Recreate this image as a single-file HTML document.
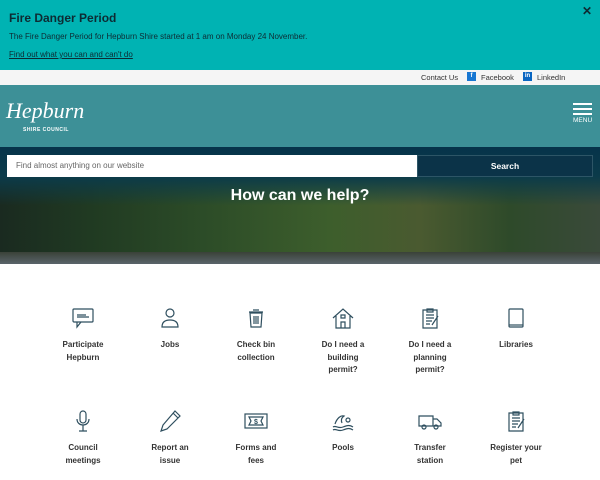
<!DOCTYPE html>
<html><head><meta charset="utf-8"><style>
*{margin:0;padding:0;box-sizing:border-box}
body{width:600px;height:480px;overflow:hidden;font-family:"Liberation Sans",sans-serif;background:#fff;position:relative}
.banner{position:absolute;left:0;top:0;width:600px;height:70px;background:#00b3b3;color:#123}
.banner h2{position:absolute;left:9px;top:11px;font-size:12px;font-weight:bold;color:#0d2b33}
.banner p{position:absolute;left:9px;top:32px;font-size:8px;color:#0d2b33}
.banner a{position:absolute;left:9px;top:50px;font-size:8px;color:#0d2b33;text-decoration:underline}
.x{position:absolute;right:8px;top:4px;font-size:12px;font-weight:bold;color:#0d2b33}
.util{position:absolute;top:70px;left:0;width:600px;height:15px;background:#f5f5f5;font-size:7.5px;color:#333}
.util span{position:absolute;top:3px}
.ic{position:absolute;top:2px;width:9px;height:9px;background:#1877d2;color:#fff;font-size:6px;font-weight:bold;text-align:center;line-height:9px}
.hdr{position:absolute;top:85px;left:0;width:600px;height:62px;background:#3d9097}
.logo{position:absolute;left:6px;top:98px;color:#fff;font-family:"Liberation Serif",serif;font-style:italic;font-size:22px}
.sc{position:absolute;left:23px;top:127px;color:#fff;font-size:5px;font-weight:bold;letter-spacing:.5px}
.menu{position:absolute;right:8px;top:103px;width:19px}
.menu i{display:block;height:2px;background:#fff;margin-bottom:3px}
.menu b{display:block;color:#fff;font-size:6.5px;font-weight:normal;margin-top:-1px}
.hero{position:absolute;top:147px;left:0;width:600px;height:117px;background:
linear-gradient(180deg,#06334a 0%,#0b3b4a 25%,rgba(20,60,40,0) 50%),
linear-gradient(90deg,#1a2a20 0%,#203a22 15%,#2d4d28 35%,#3d5e2c 55%,#4a5a30 70%,#2e4a2a 85%,#3a4a3a 100%)}
.road{position:absolute;top:252px;left:0;width:600px;height:12px;background:linear-gradient(180deg,#3a4238,#5a646a)}
.search{position:absolute;top:155px;left:7px;width:410px;height:22px;background:#fff;font-size:8px;color:#666;padding:6px 9px}
.btn{position:absolute;top:155px;left:417px;width:176px;height:22px;background:#0b3348;border:1px solid #2d5566;color:#fff;font-size:8.5px;font-weight:bold;text-align:center;line-height:20px}
.hq{position:absolute;top:187px;width:600px;text-align:center;color:#fff;font-size:16px;font-weight:bold}
.it{position:absolute;width:86px;text-align:center;font-size:8px;font-weight:bold;color:#333;line-height:12.6px}
.it svg{display:block;margin:0 auto 9px;width:24px;height:24px}
</style></head><body>
<div class="banner"><h2>Fire Danger Period</h2><p>The Fire Danger Period for Hepburn Shire started at 1 am on Monday 24 November.</p><a>Find out what you can and can't do</a><div class="x">✕</div></div>
<div class="util"><span style="left:421px">Contact Us</span><div class="ic" style="left:467px">f</div><span style="left:481px">Facebook</span><div class="ic" style="left:523px;background:#0a66c2">in</div><span style="left:537px">LinkedIn</span></div>
<div class="hdr"></div>
<div class="logo">Hepburn</div><div class="sc">SHIRE COUNCIL</div>
<div class="menu"><i></i><i></i><i></i><b>MENU</b></div>
<div class="hero"></div><div class="road"></div>
<div class="search">Find almost anything on our website</div><div class="btn">Search</div>
<div class="hq">How can we help?</div>
<div class="it" style="left:40px;top:306px"><svg viewBox="0 0 24 24" fill="none" stroke="#2f4f5f" stroke-width="1.2"><rect x="2" y="3" width="20" height="13" rx="1"/><path d="M6 16v5l4-5M6 9h9M6 11h12"/></svg>Participate<br>Hepburn</div>
<div class="it" style="left:127px;top:306px"><svg viewBox="0 0 24 24" fill="none" stroke="#2f4f5f" stroke-width="1.2"><circle cx="12" cy="7" r="4"/><path d="M4 21c0-5 3-7 8-7s8 2 8 7z"/></svg>Jobs</div>
<div class="it" style="left:213px;top:306px"><svg viewBox="0 0 24 24" fill="none" stroke="#2f4f5f" stroke-width="1.2"><path d="M6 7h12l-1 14H7zM5 6h14M9 4h6M10 10v8M12 10v8M14 10v8"/></svg>Check bin<br>collection</div>
<div class="it" style="left:300px;top:306px"><svg viewBox="0 0 24 24" fill="none" stroke="#2f4f5f" stroke-width="1.2"><path d="M2 12L12 3l10 9M5 10v12h14V10M10 22v-6h4v6M10 9h4v3h-4z"/></svg>Do I need a<br>building<br>permit?</div>
<div class="it" style="left:387px;top:306px"><svg viewBox="0 0 24 24" fill="none" stroke="#2f4f5f" stroke-width="1.2"><path d="M5 4h14v18H5zM9 3h6v3H9zM8 9h8M8 12h8M8 15h6M8 18h4M20 10l-6 9"/></svg>Do I need a<br>planning<br>permit?</div>
<div class="it" style="left:473px;top:306px"><svg viewBox="0 0 24 24" fill="none" stroke="#2f4f5f" stroke-width="1.2"><rect x="5" y="3" width="14" height="18" rx="1"/><path d="M5 19h14"/></svg>Libraries</div>
<div class="it" style="left:40px;top:409px"><svg viewBox="0 0 24 24" fill="none" stroke="#2f4f5f" stroke-width="1.2"><rect x="9" y="2" width="6" height="12" rx="3"/><path d="M6 10c0 4 3 6 6 6s6-2 6-6M12 16v6M8 22h8"/></svg>Council<br>meetings</div>
<div class="it" style="left:127px;top:409px"><svg viewBox="0 0 24 24" fill="none" stroke="#2f4f5f" stroke-width="1.2"><path d="M17 2l5 5L9 20l-6 2 2-6zM15 4l5 5"/></svg>Report an<br>issue</div>
<div class="it" style="left:213px;top:409px"><svg viewBox="0 0 24 24" fill="none" stroke="#2f4f5f" stroke-width="1.2"><rect x="1" y="5" width="22" height="14"/><path d="M5 8h14l-2 4 2 4H5l2-4z"/><text x="12" y="15" font-size="7" fill="#2f4f5f" stroke="none" text-anchor="middle">$</text></svg>Forms and<br>fees</div>
<div class="it" style="left:300px;top:409px"><svg viewBox="0 0 24 24" fill="none" stroke="#2f4f5f" stroke-width="1.2"><circle cx="17" cy="11" r="2"/><path d="M4 15c2-6 6-9 9-8-3 2-3 5-2 7M2 18c3-2 5 2 10 0s7-2 10 0M2 21c3-2 5 2 10 0s7-2 10 0"/></svg>Pools</div>
<div class="it" style="left:387px;top:409px"><svg viewBox="0 0 24 24" fill="none" stroke="#2f4f5f" stroke-width="1.2"><path d="M1 7h14v10H1zM15 10h4l4 4v3h-8"/><circle cx="6" cy="18" r="2"/><circle cx="18" cy="18" r="2"/></svg>Transfer<br>station</div>
<div class="it" style="left:473px;top:409px"><svg viewBox="0 0 24 24" fill="none" stroke="#2f4f5f" stroke-width="1.2"><path d="M5 4h14v18H5zM9 3h6v3H9zM8 9h8M8 12h8M8 15h6M8 18h4M20 10l-6 9"/></svg>Register your<br>pet</div>
</body></html>
